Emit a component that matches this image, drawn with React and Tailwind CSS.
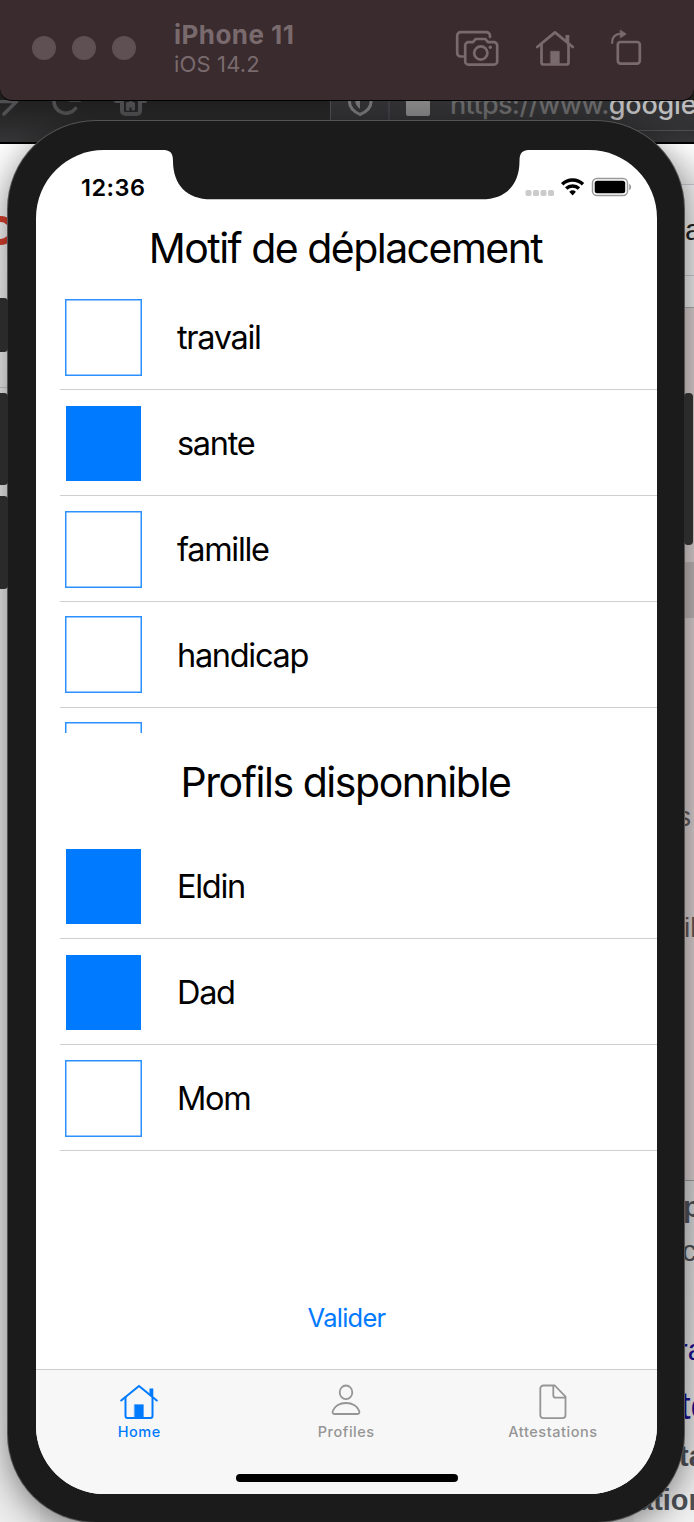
import React from "react";

const reasons = [
  { label: "travail", checked: false },
  { label: "sante", checked: true },
  { label: "famille", checked: false },
  { label: "handicap", checked: false },
  { label: "", checked: false },
];

const profiles = [
  { label: "Eldin", checked: true },
  { label: "Dad", checked: true },
  { label: "Mom", checked: false },
];

function HouseIcon({ className, strokeWidth }) {
  return (
    <svg className={className} viewBox="0 0 38 35" fill="none" stroke="currentColor" strokeWidth={strokeWidth} strokeLinecap="round" strokeLinejoin="round">
      <path d="M1.200 16 19 1.400 36.800 16" />
      <path d="M5.500 13v18.500a2 2 0 0 0 2 2h23a2 2 0 0 0 2-2V13" />
      <path d="M31.400 11.500V4" strokeWidth="3.800" strokeLinecap="butt" />
      <path d="M14.700 20.200h8.600v13h-8.600z" fill="currentColor" strokeWidth="0.6" />
    </svg>
  );
}

function CameraIcon() {
  return (
    <svg className="h-9 w-11" viewBox="0 0 44 36" fill="none" stroke="currentColor" strokeWidth="2.700" strokeLinejoin="round" strokeLinecap="round">
      <path d="M8 26.500H5.800a3.600 3.600 0 0 1-3.600-3.600V5.800a3.600 3.600 0 0 1 3.600-3.600h25.600A3.600 3.600 0 0 1 35 5.800V7" />
      <path d="M14 12.200h4l2.600-3.200h9.800l2.600 3.200h6a3.200 3.200 0 0 1 3.200 3.200v16a3.200 3.200 0 0 1-3.200 3.200H13.400a3.200 3.200 0 0 1-3.200-3.200v-16a3.200 3.200 0 0 1 3.200-3.200z" />
      <circle cx="25.800" cy="23" r="6.600" />
      <circle cx="35.300" cy="17.200" r="1.700" fill="currentColor" stroke="none" />
    </svg>
  );
}

function RotateIcon() {
  return (
    <svg className="h-9 w-8" viewBox="0 0 32 36" fill="none" stroke="currentColor" strokeWidth="2.700" strokeLinejoin="round" strokeLinecap="round">
      <rect x="7.800" y="13" width="22" height="21.600" rx="2.800" />
      <path d="M2.200 14v-1.500a7.600 7.600 0 0 1 7.600-7.600h1.600" strokeWidth="2.200" />
      <path d="M10.500 1.200 16.200 5 10.500 8.800z" fill="currentColor" strokeWidth="0.8" />
    </svg>
  );
}

function SimulatorBar() {
  return (
    <header className="absolute inset-x-0 top-0 flex h-[100px] items-center rounded-b-xl bg-[#3a2b2e] text-[#796a6d] shadow-[0_1px_0_#000]">
      <div className="ml-8 flex -translate-y-0.5 gap-4">
        <span className="size-6 rounded-full bg-[#5f5053]" />
        <span className="size-6 rounded-full bg-[#5f5053]" />
        <span className="size-6 rounded-full bg-[#5f5053]" />
      </div>
      <div className="-mt-0.5 ml-[38px] flex w-[280px] flex-col">
        <span className="text-[26px] leading-[30px] font-bold tracking-[0.450px]">iPhone 11</span>
        <span className="text-[22px] leading-[28px] tracking-[0.150px]">iOS 14.2</span>
      </div>
      <div className="-mt-1 flex items-center pl-px">
        <CameraIcon />
        <HouseIcon className="ml-[37px] h-[35px] w-[38px]" strokeWidth="2.700" />
        <div className="ml-[36px] -translate-y-px"><RotateIcon /></div>
      </div>
    </header>
  );
}

function BrowserChrome() {
  return (
    <div className="flex h-[144px] items-end border-b-2 border-black bg-linear-to-b from-[#202020] from-70% to-[#363638]">
      <div className="flex h-[42px] w-[330px] text-[#505052]">
        <svg className="h-[42px] w-[160px]" viewBox="0 0 160 42" fill="none" stroke="currentColor" strokeWidth="3.600" strokeLinecap="round" strokeLinejoin="round">
          <path d="M-4 1.500h20M4 14 16.500 1.500 10-5" />
          <path d="M54 0a12 12 0 0 0 21.500 8.500M70 0h10" />
          <path d="M116 1h6v10a3 3 0 0 0 3 3h12a3 3 0 0 0 3-3V1h5" strokeWidth="4" />
          <path d="M126.500 10V3q4.500-3 8 0v7h-2.500V7h-3v3z" fill="currentColor" strokeWidth="1" />
        </svg>
      </div>
      <div className="mb-[11px] flex h-[31px] flex-1 overflow-hidden border-b border-l border-[#505052] bg-[#333335]">
        <svg className="h-[31px] w-[100px] shrink-0" viewBox="331 100 100 31">
          <path d="M349.500 98v4c0 6 5 10 10.500 12.500 6-2.500 11-6 11-12.500v-4" fill="none" stroke="#777778" strokeWidth="3" />
          <path d="M355 98h5v11c-4-3-5-6-5-11z" fill="#777778" />
          <path d="M389 98v33" stroke="#4c4f58" />
          <rect x="406" y="92" width="24" height="24" rx="2" fill="#888889" />
        </svg>
        <div className="ml-[19px] -mt-[13px] text-[27px] leading-[36px] font-medium tracking-[-0.650px] whitespace-nowrap text-[#6b6b6c]">
          https://www.<span className="tracking-[-0.200px] text-[#bdbdbe]">google</span>
        </div>
      </div>
    </div>
  );
}

function BrowserPage() {
  return (
    <div className="flex h-[1378px] justify-between bg-[#e9e9e9]">
      <div className="w-10 overflow-hidden bg-linear-to-b from-white via-[#ededed] via-20% to-[#eeeeee]">
        <div className="h-[244px] border-b border-[#ccc] pt-[72px]">
          <div className="-ml-3.5 size-[29px] rounded-full border-[6px] border-[#d8402f]" />
        </div>
      </div>
      <div className="flex w-[60px] flex-col font-['Liberation_Sans'] text-[#4d5156] *:shrink-0">
        <div className="h-[41px] border-b border-[#c6c6ce] bg-linear-to-b from-white to-[#e8e8e8]" />
        <div className="h-[91px] border-b border-[#c6c6ce] bg-[#eeeeee] pt-[25px] pl-[51px] text-[30px] leading-[40px] text-[#222]">a</div>
        <div className="h-8 border-b border-[#aaa] bg-[#eeeeee]" />
        <div className="h-[254px] bg-[#d8cfd0]" />
        <div className="h-14 bg-[#bdb5b6]" />
        <div className="h-[563px] border-b border-[#999] bg-[#d8cfd0] pt-[179px] text-[28px] leading-[40px] text-[#5e5657]">
          <div className="h-[111px] pl-[43px]">s</div>
          <div className="pl-[50px]">il</div>
        </div>
        <div className="flex h-[341px] flex-col bg-linear-to-b from-[#d5d5d5] to-[#f2f2f2] text-[29px] leading-[44px] *:shrink-0">
          <div className="h-[44px] pt-1 pl-[49px] font-bold">p</div>
          <div className="h-[103px] pt-1 pl-[48px]">c</div>
          <div className="h-[48px] pl-[44px] text-[#1a0d91]">ra</div>
          <div className="h-[58px] pl-[46px] text-[38px] leading-[60px] text-[#1a0d91]">te</div>
          <div className="h-[44px] pl-[45px] font-bold">ta</div>
          <div className="h-[44px] pl-[3px] font-bold">ation</div>
        </div>
      </div>
    </div>
  );
}

function StatusIcons() {
  return (
    <svg className="h-6 w-[108px]" viewBox="525 175 108 24">
      <g fill="#cbcbcb">
        <rect x="525.500" y="190" width="6" height="6" rx="1.700" />
        <rect x="533" y="190" width="6" height="6" rx="1.700" />
        <rect x="540.500" y="190" width="6" height="6" rx="1.700" />
        <rect x="548" y="190" width="6" height="6" rx="1.700" />
      </g>
      <g fill="none" stroke="#000" strokeWidth="3.500">
        <path d="M562.200 184.200a15 15 0 0 1 20.800 0" />
        <path d="M566.200 188.600a9.300 9.300 0 0 1 12.800 0" />
      </g>
      <path d="M569.300 191.700a5 5 0 0 1 6.600 0l-3.300 3.700z" />
      <rect x="592.500" y="178.500" width="35" height="17" rx="4.500" fill="none" stroke="#999" strokeWidth="1.500" />
      <rect x="594.700" y="180.700" width="30.500" height="12.600" rx="2.500" />
      <path d="M629.200 184c2.600 1.200 2.600 5 0 6.200z" fill="#999" />
    </svg>
  );
}

function CheckRow({ item }) {
  return (
    <li className="ml-6 flex h-[105.750px] shrink-0 items-center border-b border-[#cfcfd1] pl-[5px]">
      <span className="mt-[1.500px] flex size-[77px] items-center justify-center">
        {item.checked ? <span className="size-[75px] bg-[#007aff]" /> : <span className="size-[77px] border-[1.500px] border-[#2d90ff] shadow-[inset_0_0_0_0.500px_#2d90ff]" />}
      </span>
      {item.label && <span className="mt-[3px] ml-[35px] text-[32.500px] leading-[40px] tracking-[-1.300px]">{item.label}</span>}
    </li>
  );
}

function TabBar() {
  return (
    <nav className="-ml-px grid h-[125.500px] grid-cols-3 border-t border-[#cdcdcf] bg-[#f7f7f7] pt-[14px] pr-px text-[14.500px] leading-[18px] font-medium tracking-[0.550px] text-[#959595]">
      <div className="flex flex-col items-center text-[#007aff]">
        <HouseIcon className="h-[36px] w-[38px]" strokeWidth="2" />
        <span className="mt-[3px] pl-[1.500px]">Home</span>
      </div>
      <div className="flex flex-col items-center">
        <svg className="h-[36px] w-[30px]" viewBox="0 0 30 36" fill="none" stroke="currentColor" strokeWidth="1.800">
          <ellipse cx="15" cy="8.300" rx="6.300" ry="6.800" />
          <path d="M3.500 30h23c1.800 0 2.200-1.300 1.700-3C26.800 22.500 21.500 19 15 19S3.200 22.500 1.800 27c-.5 1.700-.1 3 1.700 3z" />
        </svg>
        <span className="mt-[3px] pl-[1.500px]">Profiles</span>
      </div>
      <div className="flex flex-col items-center">
        <svg className="h-[36px] w-[28px]" viewBox="0 0 28 36" fill="none" stroke="currentColor" strokeWidth="1.800" strokeLinejoin="round">
          <path d="M4.500 1.500h11.300L26.500 12.700V31a3.200 3.200 0 0 1-3.200 3.200H4.500A3.200 3.200 0 0 1 1.300 31V4.700a3.200 3.200 0 0 1 3.200-3.200z" />
          <path d="M14.300 1.500v9.700a2.500 2.500 0 0 0 2.500 2.500h9.500" />
        </svg>
        <span className="mt-[3px] pl-px">Attestations</span>
      </div>
    </nav>
  );
}

function Phone() {
  return (
    <>
      <div className="absolute top-[121px] left-[8px] h-[1401px] w-[676px] rounded-[88px] bg-[#1b1b1b] px-[28px] pt-[29px] shadow-[0_0_0_1px_#545454,0_8px_36px_rgba(0,0,0,0.5)]">
        <main className="relative flex h-[1344px] w-[621px] flex-col overflow-hidden rounded-[68px] bg-white text-black">
          <div className="flex h-[74px] items-start justify-between pt-[25px] pr-[24px] pl-[45px]">
            <span className="text-[23.500px] leading-[25px] font-semibold tracking-[0.500px]">12:36</span>
            <StatusIcons />
          </div>
          <h1 className="h-[60.500px] pr-[2px] text-center text-[41px] leading-[48px] tracking-[-1.530px]">Motif de déplacement</h1>
          <ul className="flex h-[448.500px] flex-col overflow-hidden">
            {reasons.map((r, i) => <CheckRow key={i} item={r} />)}
          </ul>
          <h2 className="h-[100.500px] pr-[2px] text-center text-[41px] leading-[99px] tracking-[-1.450px]">Profils disponnible</h2>
          <ul className="flex flex-1 flex-col">
            {profiles.map((p) => <CheckRow key={p.label} item={p} />)}
          </ul>
          <button className="mb-[35px] h-8 text-[25.500px] leading-8 tracking-[-0.750px] text-[#007aff]">Valider</button>
          <TabBar />
          <svg className="absolute top-0 left-[126px] h-[50px] w-[370px]" viewBox="162 150 370 50">
            <path d="M162 149.500v.5c8 0 11 2.500 11 11 0 24 14 38.300 38 38.300h270.500c24 0 38-14.300 38-38.300 0-8.500 3-11 11-11v-.5z" fill="#1b1b1b" />
          </svg>
          <i className="absolute bottom-3 left-[199.500px] h-2 w-[222px] rounded-full bg-black" />
        </main>
      </div>
      <i className="absolute top-[298px] left-[-6px] h-[54px] w-[14px] rounded-[4px] bg-[#2a2a2a]" />
      <i className="absolute top-[393px] left-[-6px] h-[92px] w-[14px] rounded-[4px] bg-[#2a2a2a]" />
      <i className="absolute top-[496px] left-[-6px] h-[93px] w-[14px] rounded-[4px] bg-[#2a2a2a]" />
      <i className="absolute top-[393px] left-[684px] h-[152px] w-[9px] rounded-[4px] bg-[#2b2b2b]" />
    </>
  );
}

export default function App() {
  return (
    <div className="relative h-[1522px] w-[694px] overflow-hidden bg-black font-['Inter','Liberation_Sans',sans-serif]">
      <BrowserChrome />
      <BrowserPage />
      <Phone />
      <SimulatorBar />
    </div>
  );
}
